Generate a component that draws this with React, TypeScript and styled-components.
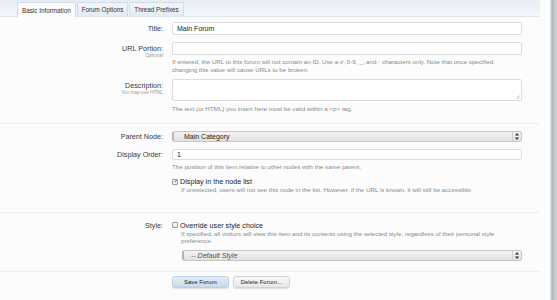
import React from 'react';
import styled, { createGlobalStyle } from 'styled-components';

const GlobalStyle = createGlobalStyle`
  body {
    margin: 0;
    background: #fcfcfd;
    font-family: "Liberation Sans", Arial, sans-serif;
    color: #333;
  }
`

const Page = styled.div`
  display: flex;
  height: 300px;
  overflow: hidden;
`

const Main = styled.div`
  flex: 1;
  background: #fcfcfd;
  padding-right: 10px;
`

const WindowEdge = styled.div`
  width: 6px;
  border-left: 1px solid #d9dcdf;
  background: linear-gradient(to right, #c9cdd1 0, #aeb3b8 2px, #c4c8cc 3px, #cdd1d4 100%);
`

const TabBar = styled.div`
  display: flex;
  align-items: flex-end;
  gap: 1px;
  height: 17px;
  padding-left: 17px;
  box-sizing: border-box;
  background: linear-gradient(to bottom, #e6edf5, #f4f7fb);
  border-bottom: 1px solid #dde6ef;
`

const Tab = styled.div<{ $active?: boolean }>`
  box-sizing: border-box;
  padding: 0 4px;
  display: flex;
  align-items: center;
  font-size: 6.3px;
  color: #333;
  border: 1px solid #cfdbe7;
  border-bottom: none;
  border-radius: 2px 2px 0 0;
  background: ${p => (p.$active ? '#fcfcfd' : 'linear-gradient(to bottom, #f0f5fa, #e3ecf5)')};
  margin-bottom: ${p => (p.$active ? '-1px' : '0')};
  height: ${p => (p.$active ? '15px' : '14px')};
`

const Section = styled.div<{ $top: number; $bottom: number; $line?: boolean }>`
  display: flex;
  flex-direction: column;
  padding-top: ${p => p.$top}px;
  padding-bottom: ${p => p.$bottom}px;
  border-bottom: ${p => (p.$line ? '1px solid #eceef0' : 'none')};
`

const Row = styled.div<{ $gap?: number }>`
  display: grid;
  grid-template-columns: 165px 350px;
  column-gap: 7px;
  margin-top: ${p => p.$gap ?? 0}px;
`

const LabelCell = styled.div<{ $pad?: number }>`
  display: flex;
  flex-direction: column;
  align-items: flex-end;
  padding-top: ${p => p.$pad ?? 2}px;
  padding-right: 2px;
`

const Label = styled.span`
  font-size: 7.2px;
  line-height: 9px;
  color: #3a3a3a;
`

const SubLabel = styled.span`
  font-size: 4.8px;
  line-height: 6px;
  font-style: italic;
  color: #999;
`

const Field = styled.div`
  display: flex;
  flex-direction: column;
`

const TextBox = styled.div<{ $h?: number }>`
  position: relative;
  height: ${p => p.$h ?? 13}px;
  box-sizing: border-box;
  border: 1px solid #dcdcdc;
  border-radius: 2px;
  background: #fff;
  padding: 0 4px;
  display: flex;
  align-items: center;
  font-size: 7px;
  color: #222;
`

const Grip = styled.svg`
  position: absolute;
  right: 1px;
  bottom: 1px;
`

const Hint = styled.div<{ $gap?: number; $indent?: number }>`
  margin-top: ${p => p.$gap ?? 3}px;
  margin-left: ${p => p.$indent ?? 0}px;
  font-size: 6.2px;
  line-height: 7.5px;
  color: #8a8a8a;
  white-space: nowrap;
`

const SelectBox = styled.div<{ $indent?: number; $italic?: boolean }>`
  position: relative;
  height: 11px;
  box-sizing: border-box;
  margin-left: ${p => p.$indent ?? 0}px;
  border: 1px solid #c6c6c6;
  border-left: 2px solid #b5b5b5;
  border-radius: 3px;
  background: linear-gradient(to bottom, #f3f3f3, #e1e1e1);
  display: flex;
  align-items: center;
  padding-left: ${p => (p.$italic ? 7 : 10)}px;
  font-size: 7px;
  font-style: ${p => (p.$italic ? 'italic' : 'normal')};
  color: ${p => (p.$italic ? '#555' : '#222')};
`

const Stepper = styled.div`
  position: absolute;
  right: 0;
  top: 0;
  bottom: 0;
  width: 8px;
  border-left: 1px solid #cfcfcf;
  display: flex;
  align-items: center;
  justify-content: center;
`

const Check = styled.label`
  display: flex;
  align-items: center;
  gap: 2px;
  font-size: 7.2px;
  line-height: 9px;
  color: #222;
`

const Box = styled.span`
  width: 6px;
  height: 6px;
  box-sizing: border-box;
  border: 1px solid #9a9a9a;
  border-radius: 1px;
  background: linear-gradient(to bottom, #fff, #e8e8e8);
  display: flex;
  align-items: center;
  justify-content: center;
`

const Buttons = styled.div`
  display: flex;
  gap: 4px;
`

const Button = styled.div<{ $primary?: boolean }>`
  height: 12px;
  box-sizing: border-box;
  padding: 0 ${p => (p.$primary ? 11 : 7)}px;
  border-radius: 3px;
  border: 1px solid ${p => (p.$primary ? '#b9cfe3' : '#d2d2d2')};
  background: ${p =>
    p.$primary
      ? 'linear-gradient(to bottom, #e4eef8, #c6d9ec)'
      : 'linear-gradient(to bottom, #fafafa, #e6e6e6)'};
  box-shadow: 0 1px 1px rgba(0, 0, 0, 0.12);
  display: flex;
  align-items: center;
  font-size: 6px;
  color: #222;
`

const Arrows = () => (
  <svg width="4" height="7" viewBox="0 0 4 7">
    <path d="M2 0 L4 2.6 L0 2.6 Z" fill="#333" />
    <path d="M2 7 L4 4.4 L0 4.4 Z" fill="#333" />
  </svg>
)

const Tick = () => (
  <svg width="6" height="6" viewBox="0 0 6 6" style={{ marginTop: -1, marginLeft: 1 }}>
    <path d="M0.8 3 L2.3 4.7 L5.6 0.4" stroke="#222" strokeWidth="1.2" fill="none" />
  </svg>
)

const App = () => {
  return (
    <>
      <GlobalStyle />
      <Page>
        <Main>
          <TabBar>
            <Tab $active>Basic Information</Tab>
            <Tab>Forum Options</Tab>
            <Tab>Thread Prefixes</Tab>
          </TabBar>

          <Section $top={5} $bottom={10} $line>
            <Row>
              <LabelCell><Label>Title:</Label></LabelCell>
              <Field><TextBox>Main Forum</TextBox></Field>
            </Row>
            <Row $gap={7}>
              <LabelCell>
                <Label>URL Portion:</Label>
                <SubLabel>Optional</SubLabel>
              </LabelCell>
              <Field>
                <TextBox />
                <Hint>
                  If entered, the URL to this forum will not contain an ID. Use a-z, 0-9, _, and - characters only. Note that once specified,
                  <br />
                  changing this value will cause URLs to be broken.
                </Hint>
              </Field>
            </Row>
            <Row $gap={6}>
              <LabelCell>
                <Label>Description:</Label>
                <SubLabel>You may use HTML</SubLabel>
              </LabelCell>
              <Field>
                <TextBox $h={22}>
                  <Grip width="4" height="4" viewBox="0 0 4 4">
                    <path d="M0.5 3.5 L3.5 0.5 M2 3.5 L3.5 2" stroke="#999" strokeWidth="0.6" />
                  </Grip>
                </TextBox>
                <Hint $gap={4}>The text (or HTML) you insert here must be valid within a &lt;p&gt; tag.</Hint>
              </Field>
            </Row>
          </Section>

          <Section $top={7} $bottom={18} $line>
            <Row>
              <LabelCell $pad={1}><Label>Parent Node:</Label></LabelCell>
              <Field>
                <SelectBox>
                  Main Category
                  <Stepper><Arrows /></Stepper>
                </SelectBox>
              </Field>
            </Row>
            <Row $gap={7}>
              <LabelCell $pad={1}><Label>Display Order:</Label></LabelCell>
              <Field>
                <TextBox $h={11}>1</TextBox>
                <Hint>The position of this item relative to other nodes with the same parent.</Hint>
              </Field>
            </Row>
            <Row $gap={7}>
              <div />
              <Field>
                <Check>
                  <Box><Tick /></Box>
                  Display in the node list
                </Check>
                <Hint $gap={0} $indent={9}>
                  If unselected, users will not see this node in the list. However, if the URL is known, it will still be accessible.
                </Hint>
              </Field>
            </Row>
          </Section>

          <Section $top={8} $bottom={10} $line>
            <Row>
              <LabelCell $pad={0}><Label>Style:</Label></LabelCell>
              <Field>
                <Check>
                  <Box />
                  Override user style choice
                </Check>
                <Hint $gap={0} $indent={9}>
                  If specified, all visitors will view this item and its contents using the selected style, regardless of their personal style
                  <br />
                  preference.
                </Hint>
                <SelectBox $indent={10} $italic style={{ marginTop: 5 }}>
                  -- Default Style
                  <Stepper><Arrows /></Stepper>
                </SelectBox>
              </Field>
            </Row>
          </Section>

          <Section $top={4} $bottom={0}>
            <Row>
              <div />
              <Buttons>
                <Button $primary>Save Forum</Button>
                <Button>Delete Forum...</Button>
              </Buttons>
            </Row>
          </Section>
        </Main>
        <WindowEdge />
      </Page>
    </>
  )
}

export default App;
